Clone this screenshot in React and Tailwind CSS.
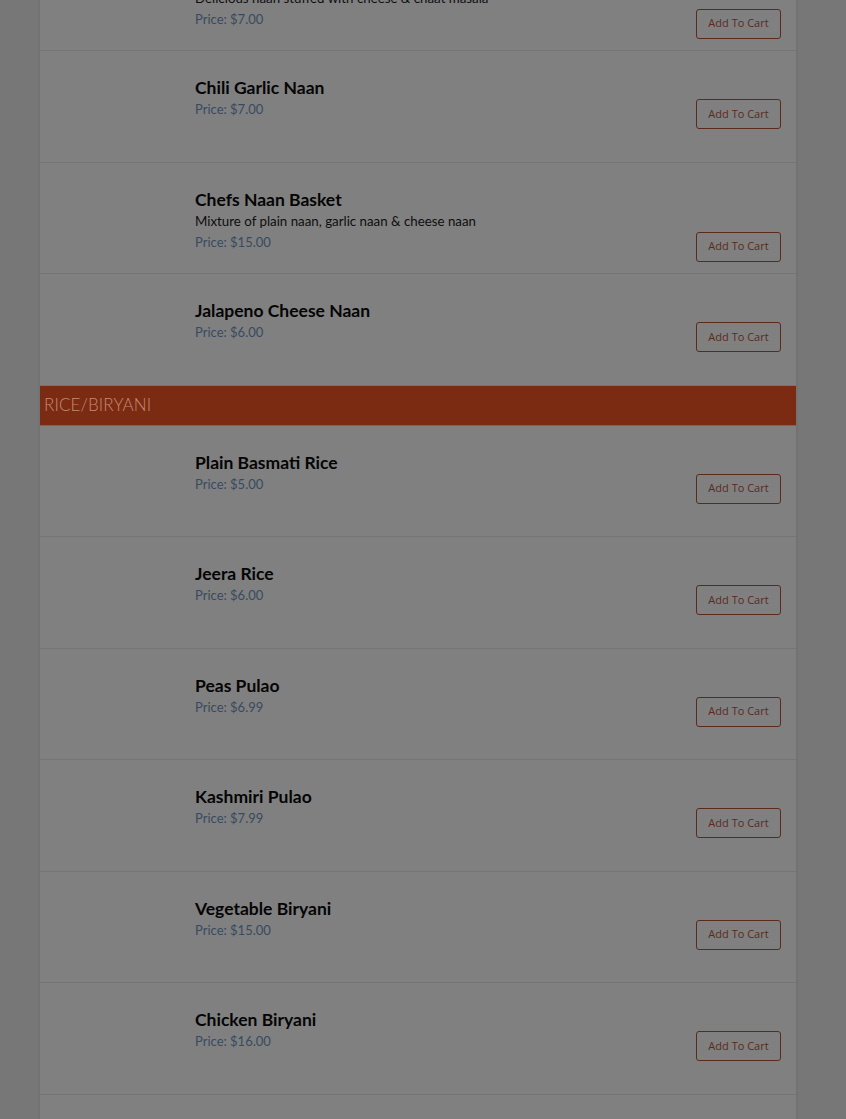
import React from "react";

const top = [
  { name: "Cheese Chaat Naan", desc: "Delicious naan stuffed with cheese & chaat masala", price: "$7.00" },
  { name: "Chili Garlic Naan", price: "$7.00" },
  { name: "Chefs Naan Basket", desc: "Mixture of plain naan, garlic naan & cheese naan", price: "$15.00" },
  { name: "Jalapeno Cheese Naan", price: "$6.00" },
];
const rice = [
  { name: "Plain Basmati Rice", price: "$5.00" },
  { name: "Jeera Rice", price: "$6.00" },
  { name: "Peas Pulao", price: "$6.99" },
  { name: "Kashmiri Pulao", price: "$7.99" },
  { name: "Vegetable Biryani", price: "$15.00" },
  { name: "Chicken Biryani", price: "$16.00" },
  { name: "Hyderabadi Biryani", price: "$16.00" },
];

function Row({ item }) {
  return (
    <div className="h-[111.5px] border-b border-[#747474] flex pl-[155px] pr-[15px] pt-[26px]">
      <div className="flex-1 flex items-start">
        <div className="flex-1 flex items-end justify-between">
          <div className="flex flex-col">
            <div className="text-[17.5px] leading-[22px] font-bold text-[#050505]">{item.name}</div>
            {item.desc && (
              <div className="text-[13.3px] leading-[21px] text-[#0e0e0e]">{item.desc}</div>
            )}
            <div className="text-[13px] leading-[21px] text-[#384a60]">Price: {item.price}</div>
          </div>
          <button
            className="-mb-[9px] w-[85px] h-[30px] border border-[#5a2b1d] rounded-[3px] text-[11px] text-[#5a2b1d] bg-transparent"
            style={{ fontFamily: '"Open Sans", sans-serif' }}
          >
            Add To Cart
          </button>
        </div>
      </div>
    </div>
  );
}

export default function App() {
  return (
    <div
      className="w-[846px] h-[1119px] overflow-hidden bg-[#777777]"
      style={{ fontFamily: '"Source Sans Pro", "Lato", sans-serif' }}
    >
      <div className="ml-[38px] w-[760px] -mt-[60.5px] bg-[#808080] border-l-2 border-r-2 border-[#727272]">
        {top.map((it) => (
          <Row key={it.name} item={it} />
        ))}
        <div className="h-[40px] bg-[#7b2b11] flex items-center pl-[4px] border-b-[1px] border-[#8a5e52]">
          <span className="text-[17px] font-light text-[#c48a78] tracking-[0.1px]">RICE/BIRYANI</span>
        </div>
        {rice.map((it) => (
          <Row key={it.name} item={it} />
        ))}
      </div>
    </div>
  );
}
